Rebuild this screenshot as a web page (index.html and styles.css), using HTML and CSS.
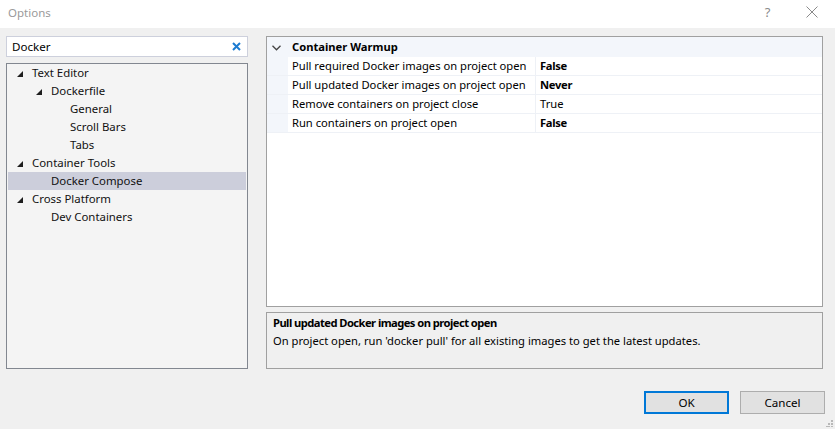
FILE: index.html
```html
<!DOCTYPE html>
<html>
<head>
<meta charset="utf-8">
<link rel="stylesheet" href="styles.css">
</head>
<body>
<div class="dialog">
  <div class="titlebar">
    <span class="title">Options</span>
    <div class="title-buttons">
      <span class="help">?</span>
      <svg class="close" width="12" height="12" viewBox="0 0 12 12"><path d="M0.5 0.5 L11.5 11.5 M11.5 0.5 L0.5 11.5" stroke="#8a8a8a" stroke-width="1" fill="none"/></svg>
    </div>
  </div>
  <div class="main">
    <div class="left">
      <div class="search">
        <span class="search-text">Docker</span>
        <svg class="clear" width="9" height="9" viewBox="0 0 9 9"><path d="M1 1 L8 8 M8 1 L1 8" stroke="#1c7bd1" stroke-width="2" fill="none"/></svg>
      </div>
      <div class="tree">
        <div class="node l1"><svg class="tri" width="6" height="6" viewBox="0 0 6 6"><polygon points="6,0 6,6 0,6" fill="#1e1e1e"/></svg><span>Text Editor</span></div>
        <div class="node l2"><svg class="tri" width="6" height="6" viewBox="0 0 6 6"><polygon points="6,0 6,6 0,6" fill="#1e1e1e"/></svg><span>Dockerfile</span></div>
        <div class="node l3"><span>General</span></div>
        <div class="node l3"><span>Scroll Bars</span></div>
        <div class="node l3"><span>Tabs</span></div>
        <div class="node l1"><svg class="tri" width="6" height="6" viewBox="0 0 6 6"><polygon points="6,0 6,6 0,6" fill="#1e1e1e"/></svg><span>Container Tools</span></div>
        <div class="node l2 leaf selected"><span>Docker Compose</span></div>
        <div class="node l1"><svg class="tri" width="6" height="6" viewBox="0 0 6 6"><polygon points="6,0 6,6 0,6" fill="#1e1e1e"/></svg><span>Cross Platform</span></div>
        <div class="node l2 leaf"><span>Dev Containers</span></div>
      </div>
    </div>
    <div class="right">
      <div class="grid">
        <div class="category">
          <svg class="chev" width="9" height="6" viewBox="0 0 9 6"><path d="M0.5 0.8 L4.5 4.8 L8.5 0.8" stroke="#444" stroke-width="1.3" fill="none"/></svg>
          <span class="cat-name">Container Warmup</span>
        </div>
        <div class="prop"><div class="margin"></div><div class="pname">Pull required Docker images on project open</div><div class="pval bold">False</div></div>
        <div class="prop"><div class="margin"></div><div class="pname">Pull updated Docker images on project open</div><div class="pval bold">Never</div></div>
        <div class="prop"><div class="margin"></div><div class="pname">Remove containers on project close</div><div class="pval">True</div></div>
        <div class="prop"><div class="margin"></div><div class="pname">Run containers on project open</div><div class="pval bold">False</div></div>
      </div>
      <div class="desc">
        <div class="desc-title">Pull updated Docker images on project open</div>
        <div class="desc-text">On project open, run 'docker pull' for all existing images to get the latest updates.</div>
      </div>
    </div>
  </div>
  <div class="buttons">
    <button class="btn ok">OK</button>
    <button class="btn">Cancel</button>
  </div>
  <svg class="grip" width="7" height="7" viewBox="0 0 7 7">
    <rect x="5" y="0" width="2" height="2" fill="#b8b8b8"/>
    <rect x="2" y="3" width="2" height="2" fill="#b8b8b8"/>
    <rect x="5" y="3" width="2" height="2" fill="#b8b8b8"/>
    <rect x="0" y="6" width="2" height="1" fill="#b8b8b8"/>
    <rect x="2" y="6" width="2" height="1" fill="#b8b8b8"/>
    <rect x="5" y="6" width="2" height="1" fill="#b8b8b8"/>
  </svg>
</div>
</body>
</html>
```

FILE: styles.css
```css
* { box-sizing: border-box; }
html, body {
  margin: 0;
  padding: 0;
}
body {
  width: 835px;
  height: 429px;
  overflow: hidden;
  font-family: "Noto Sans", "Open Sans", sans-serif;
  font-size: 11.2px;
  color: #000;
  background: #f0f0f0;
}
.dialog {
  position: relative;
  width: 835px;
  height: 429px;
  display: flex;
  flex-direction: column;
}
.titlebar {
  height: 28px;
  background: #ffffff;
  display: flex;
  align-items: center;
  justify-content: space-between;
  padding-left: 8px;
}
.title {
  color: #9a9a9a;
  font-size: 11.5px;
  margin-top: -3px;
}
.title-buttons {
  display: flex;
  align-items: center;
  height: 100%;
}
.help {
  color: #8a8a8a;
  font-size: 13px;
  width: 46px;
  text-align: center;
  margin-top: -4px;
  padding-left: 3px;
}
.close {
  margin: -4px 17px 0 17px;
}
.main {
  display: flex;
  padding: 8px 12px 0 6px;
  gap: 18px;
  height: 341px;
}
.left {
  width: 242px;
  display: flex;
  flex-direction: column;
  gap: 6px;
}
.search {
  height: 21px;
  background: #fff;
  border: 1px solid #cdd0dc;
  display: flex;
  align-items: center;
  justify-content: space-between;
  padding: 0 6px 0 5px;
}
.search-text {
  line-height: 19px;
  margin-top: -1px;
  font-size: 11.6px;
}
.tree {
  height: 306px;
  background: #f4f4f4;
  border: 1px solid #828790;
  padding: 0 1px;
}
.node {
  height: 18px;
  display: flex;
  align-items: center;
  color: #111;
  white-space: nowrap;
  font-size: 11.4px;
}
.node span { margin-top: -1px; }
.node .tri {
  margin-right: 9px;
  margin-top: 1px;
}
.l1 { padding-left: 9px; }
.l2 { padding-left: 28px; }
.l2.leaf { padding-left: 43px; }
.l3 { padding-left: 62px; }
.selected { background: #cccedb; }
.right {
  width: 557px;
  display: flex;
  flex-direction: column;
  gap: 5px;
}
.grid {
  height: 271px;
  background: #fff;
  border: 1px solid #a0a0a0;
}
.category {
  height: 20px;
  background: #f3f6fb;
  display: flex;
  align-items: center;
  padding-left: 5px;
}
.chev { margin-right: 11px; margin-top: 1px; }
.cat-name {
  font-weight: bold;
  margin-top: -1px;
}
.prop {
  height: 19px;
  display: flex;
  border-bottom: 1px solid #eef1f6;
}
.margin {
  width: 21px;
  background: #f3f6fb;
}
.pname {
  width: 248px;
  padding-left: 4px;
  line-height: 17px;
  border-right: 1px solid #eef1f6;
  white-space: nowrap;
  overflow: hidden;
}
.pval {
  padding-left: 4px;
  line-height: 17px;
}
.bold { font-weight: bold; letter-spacing: -0.3px; }
.desc {
  height: 57px;
  border: 1px solid #a0a0a0;
  background: #f0f0f0;
  padding: 1px 6px;
}
.desc-title {
  font-weight: bold;
  line-height: 18px;
  letter-spacing: -0.55px;
}
.desc-text {
  line-height: 18px;
}
.buttons {
  display: flex;
  justify-content: flex-end;
  gap: 11px;
  padding: 22px 10px 0 0;
}
.btn {
  width: 85px;
  height: 23px;
  background: #e1e1e1;
  border: 1px solid #adadad;
  font-family: "Noto Sans", "Open Sans", sans-serif;
  font-size: 11.6px;
  color: #000;
  padding: 0;
  line-height: 19px;
}
.btn.ok {
  border: 2px solid #0078d7;
}
.grip {
  position: absolute;
  right: 2px;
  bottom: 2px;
}
```
